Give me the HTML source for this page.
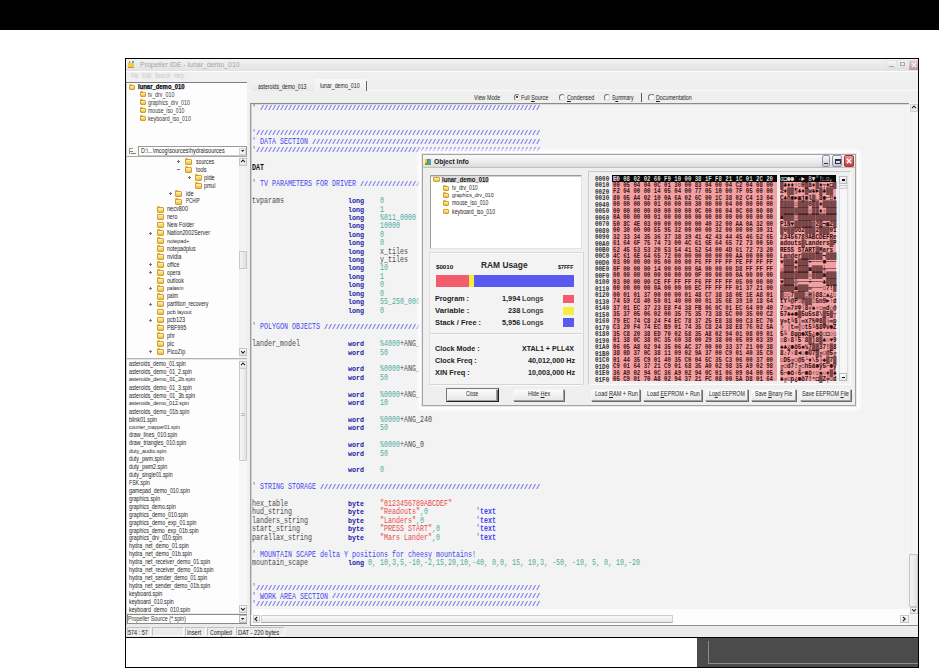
<!DOCTYPE html><html><head><meta charset="utf-8"><style>
*{margin:0;padding:0;box-sizing:border-box}
html,body{width:939px;height:668px;overflow:hidden}
body{position:relative;background:#fff;font-family:"Liberation Sans",sans-serif}
.a{position:absolute}
.t{position:absolute;white-space:pre;transform-origin:0 50%}
.c i{font-style:normal;color:rgba(40,10,10,0.6)}
.c{position:absolute;white-space:pre;font-family:"Liberation Mono",monospace;transform-origin:0 50%}
</style></head><body><div class="a" style="left:0.00px;top:0.00px;width:939.00px;height:30.00px;background:#000"></div>
<div class="a" style="left:125.00px;top:58.00px;width:794.00px;height:610.00px;border:1px solid #000;background:#efefef"></div>
<div class="a" style="left:126.00px;top:59.00px;width:792.00px;height:11.60px;background:linear-gradient(#f2f2f2,#e2e2e2)"></div>
<div class="a" style="left:126.00px;top:70.60px;width:792.00px;height:1.00px;background:#fdfdfd"></div>
<div class="t" style="left:139.50px;top:60.20px;font-size:8px;line-height:10px;color:#a6a6a6;transform:scaleX(0.869);">Propeller IDE - lunar_demo_010</div>
<div class="a" style="left:128.00px;top:62.50px;width:6.00px;height:5.00px;background:#e8d040;border-bottom:1.5px solid #d89020"></div>
<div class="a" style="left:128.50px;top:61.00px;width:1.50px;height:2.00px;background:#e06060"></div>
<div class="a" style="left:132.00px;top:61.00px;width:1.50px;height:2.00px;background:#60a0e0"></div>
<div class="a" style="left:885.50px;top:59.50px;width:11.00px;height:10.50px;background:linear-gradient(#f6f6f6,#dedede);border:1px solid #e4e4e4"></div>
<div class="a" style="left:888.50px;top:65.50px;width:5.00px;height:1.20px;background:#a8a8a8"></div>
<div class="a" style="left:897.00px;top:59.50px;width:11.00px;height:10.50px;background:linear-gradient(#f6f6f6,#dedede);border:1px solid #e4e4e4"></div>
<div class="a" style="left:899.50px;top:62.00px;width:5.00px;height:4.00px;border:1px solid #a8a8a8;border-top-width:1.5px"></div>
<div class="a" style="left:908.50px;top:59.50px;width:9.50px;height:10.50px;background:linear-gradient(#e8d4dc,#b49aa4)"></div>
<svg class="a" style="left:910.5px;top:61.5px" width="6" height="6" viewBox="0 0 6 6"><path d="M1,1 L5,5 M5,1 L1,5" stroke="#f4f0f0" stroke-width="1.3"/></svg>
<div class="a" style="left:126.00px;top:71.60px;width:792.00px;height:10.40px;background:#f0f0f0"></div>
<div class="t" style="left:131.00px;top:72.00px;font-size:6.5px;line-height:8px;color:#c6c6c6;transform:scaleX(0.687);">File</div>
<div class="t" style="left:142.00px;top:72.00px;font-size:6.5px;line-height:8px;color:#c6c6c6;transform:scaleX(0.821);">Edit</div>
<div class="t" style="left:155.00px;top:72.00px;font-size:6.5px;line-height:8px;color:#c6c6c6;transform:scaleX(0.738);">Search</div>
<div class="t" style="left:174.00px;top:72.00px;font-size:6.5px;line-height:8px;color:#c6c6c6;transform:scaleX(0.763);">Help</div>
<div class="a" style="left:126.00px;top:82.00px;width:121.00px;height:1.00px;background:#808080"></div>
<div class="a" style="left:126.00px;top:83.00px;width:121.00px;height:63.00px;background:#fdfdfd"></div>
<div class="a" style="left:129.00px;top:83.70px;width:3.2px;height:1.8px;background:#e0b040;border-radius:1px 1px 0 0"></div>
<div class="a" style="left:129.00px;top:84.50px;width:6px;height:5px;background:linear-gradient(#fff4c0 0,#fce48a 30%,#eebc3c 100%);border:1px solid #d0a030;border-radius:1px"></div>
<div class="t" style="left:138.00px;top:82.10px;font-size:7px;line-height:9px;color:#0a0a14;font-weight:bold;transform:scaleX(0.844);-webkit-text-stroke:0.25px #0a0a14;">lunar_demo_010</div>
<div class="a" style="left:139.50px;top:91.40px;width:3.2px;height:1.8px;background:#e0b040;border-radius:1px 1px 0 0"></div>
<div class="a" style="left:139.50px;top:92.20px;width:6px;height:5px;background:linear-gradient(#fff4c0 0,#fce48a 30%,#eebc3c 100%);border:1px solid #d0a030;border-radius:1px"></div>
<div class="t" style="left:147.70px;top:90.70px;font-size:6.4px;line-height:8px;color:#3a3a3a;transform:scaleX(0.833);">tv_drv_010</div>
<div class="a" style="left:139.50px;top:99.35px;width:3.2px;height:1.8px;background:#e0b040;border-radius:1px 1px 0 0"></div>
<div class="a" style="left:139.50px;top:100.15px;width:6px;height:5px;background:linear-gradient(#fff4c0 0,#fce48a 30%,#eebc3c 100%);border:1px solid #d0a030;border-radius:1px"></div>
<div class="t" style="left:147.70px;top:98.65px;font-size:6.4px;line-height:8px;color:#3a3a3a;transform:scaleX(0.825);">graphics_drv_010</div>
<div class="a" style="left:139.50px;top:107.30px;width:3.2px;height:1.8px;background:#e0b040;border-radius:1px 1px 0 0"></div>
<div class="a" style="left:139.50px;top:108.10px;width:6px;height:5px;background:linear-gradient(#fff4c0 0,#fce48a 30%,#eebc3c 100%);border:1px solid #d0a030;border-radius:1px"></div>
<div class="t" style="left:147.70px;top:106.60px;font-size:6.4px;line-height:8px;color:#3a3a3a;transform:scaleX(0.808);">mouse_iso_010</div>
<div class="a" style="left:139.50px;top:115.25px;width:3.2px;height:1.8px;background:#e0b040;border-radius:1px 1px 0 0"></div>
<div class="a" style="left:139.50px;top:116.05px;width:6px;height:5px;background:linear-gradient(#fff4c0 0,#fce48a 30%,#eebc3c 100%);border:1px solid #d0a030;border-radius:1px"></div>
<div class="t" style="left:147.70px;top:114.55px;font-size:6.4px;line-height:8px;color:#3a3a3a;transform:scaleX(0.820);">keyboard_iso_010</div>
<div class="a" style="left:126.00px;top:146.00px;width:121.00px;height:11.00px;background:#f8f8f8"></div>
<div class="a" style="left:129.00px;top:147.50px;width:1.20px;height:6.00px;background:#8a9a70"></div>
<div class="a" style="left:130.00px;top:148.00px;width:3.00px;height:1.20px;background:#9ab060"></div>
<div class="a" style="left:130.00px;top:150.50px;width:2.50px;height:1.20px;background:#7a8a70"></div>
<div class="a" style="left:131.00px;top:152.50px;width:5.00px;height:1.30px;background:#7070d0"></div>
<div class="a" style="left:133.50px;top:152.50px;width:2.50px;height:1.30px;background:#60a040"></div>
<div class="a" style="left:137.80px;top:146.40px;width:109.00px;height:9.20px;background:#fff;border:1px solid #9a9a9a;border-bottom-color:#c8c8c8"></div>
<div class="t" style="left:140.50px;top:147.00px;font-size:6.6px;line-height:8px;color:#1a1a1a;transform:scaleX(0.836);">D:\...\mcog\sources\hydra\sources</div>
<div class="a" style="left:239.00px;top:148.00px;width:7.00px;height:6.50px;background:#f4f4f4;border:1px solid #d4d4d4"></div>
<svg class="a" style="left:240.90px;top:150.24px" width="3.2" height="1.9" viewBox="0 0 3.2 1.9"><polygon points="0,0 3.2,0 1.6,1.92" fill="#222"/></svg>
<div class="a" style="left:126.00px;top:157.00px;width:121.00px;height:201.00px;background:#fdfdfd"></div>
<div class="a" style="left:126.00px;top:156.30px;width:121.00px;height:1.00px;background:#a8a8a8"></div>
<div class="a" style="left:176.90px;top:161.40px;width:3.00px;height:1.00px;background:#777"></div>
<div class="a" style="left:177.90px;top:160.40px;width:1.00px;height:3.00px;background:#777"></div>
<div class="a" style="left:184.70px;top:158.30px;width:3.2px;height:1.8px;background:#e0b040;border-radius:1px 1px 0 0"></div>
<div class="a" style="left:184.70px;top:159.10px;width:7.5px;height:6px;background:linear-gradient(#fff4c0 0,#fce48a 30%,#eebc3c 100%);border:1px solid #d0a030;border-radius:1px"></div>
<div class="t" style="left:195.50px;top:157.90px;font-size:6.4px;line-height:8px;color:#242424;transform:scaleX(0.812);">sources</div>
<div class="a" style="left:176.90px;top:169.31px;width:3.00px;height:1.00px;background:#777"></div>
<div class="a" style="left:184.70px;top:166.21px;width:3.2px;height:1.8px;background:#e0b040;border-radius:1px 1px 0 0"></div>
<div class="a" style="left:184.70px;top:167.01px;width:7.5px;height:6px;background:linear-gradient(#fff4c0 0,#fce48a 30%,#eebc3c 100%);border:1px solid #d0a030;border-radius:1px"></div>
<div class="t" style="left:195.50px;top:165.81px;font-size:6.4px;line-height:8px;color:#242424;transform:scaleX(0.784);">tools</div>
<div class="a" style="left:187.70px;top:177.22px;width:3.00px;height:1.00px;background:#777"></div>
<div class="a" style="left:188.70px;top:176.22px;width:1.00px;height:3.00px;background:#777"></div>
<div class="a" style="left:194.60px;top:174.12px;width:3.2px;height:1.8px;background:#e0b040;border-radius:1px 1px 0 0"></div>
<div class="a" style="left:194.60px;top:174.92px;width:7.5px;height:6px;background:linear-gradient(#fff4c0 0,#fce48a 30%,#eebc3c 100%);border:1px solid #d0a030;border-radius:1px"></div>
<div class="t" style="left:204.10px;top:173.72px;font-size:6.4px;line-height:8px;color:#242424;transform:scaleX(0.892);">pide</div>
<div class="a" style="left:194.60px;top:182.03px;width:3.2px;height:1.8px;background:#e0b040;border-radius:1px 1px 0 0"></div>
<div class="a" style="left:194.60px;top:182.83px;width:7.5px;height:6px;background:linear-gradient(#fff4c0 0,#fce48a 30%,#eebc3c 100%);border:1px solid #d0a030;border-radius:1px"></div>
<div class="t" style="left:204.10px;top:181.63px;font-size:6.4px;line-height:8px;color:#242424;transform:scaleX(0.821);">pmul</div>
<div class="a" style="left:168.50px;top:193.04px;width:3.00px;height:1.00px;background:#777"></div>
<div class="a" style="left:169.50px;top:192.04px;width:1.00px;height:3.00px;background:#777"></div>
<div class="a" style="left:174.80px;top:189.94px;width:3.2px;height:1.8px;background:#e0b040;border-radius:1px 1px 0 0"></div>
<div class="a" style="left:174.80px;top:190.74px;width:7.5px;height:6px;background:linear-gradient(#fff4c0 0,#fce48a 30%,#eebc3c 100%);border:1px solid #d0a030;border-radius:1px"></div>
<div class="t" style="left:185.60px;top:189.54px;font-size:6.4px;line-height:8px;color:#242424;transform:scaleX(0.901);">ide</div>
<div class="a" style="left:174.80px;top:197.85px;width:3.2px;height:1.8px;background:#e0b040;border-radius:1px 1px 0 0"></div>
<div class="a" style="left:174.80px;top:198.65px;width:7.5px;height:6px;background:linear-gradient(#fff4c0 0,#fce48a 30%,#eebc3c 100%);border:1px solid #d0a030;border-radius:1px"></div>
<div class="t" style="left:185.60px;top:197.45px;font-size:6.4px;line-height:8px;color:#242424;transform:scaleX(0.700);">PCHIP</div>
<div class="a" style="left:156.80px;top:205.76px;width:3.2px;height:1.8px;background:#e0b040;border-radius:1px 1px 0 0"></div>
<div class="a" style="left:156.80px;top:206.56px;width:7.5px;height:6px;background:linear-gradient(#fff4c0 0,#fce48a 30%,#eebc3c 100%);border:1px solid #d0a030;border-radius:1px"></div>
<div class="t" style="left:167.10px;top:205.36px;font-size:6.4px;line-height:8px;color:#242424;transform:scaleX(0.872);">necv800</div>
<div class="a" style="left:156.80px;top:213.67px;width:3.2px;height:1.8px;background:#e0b040;border-radius:1px 1px 0 0"></div>
<div class="a" style="left:156.80px;top:214.47px;width:7.5px;height:6px;background:linear-gradient(#fff4c0 0,#fce48a 30%,#eebc3c 100%);border:1px solid #d0a030;border-radius:1px"></div>
<div class="t" style="left:167.10px;top:213.27px;font-size:6.4px;line-height:8px;color:#242424;transform:scaleX(0.803);">nero</div>
<div class="a" style="left:156.80px;top:221.58px;width:3.2px;height:1.8px;background:#e0b040;border-radius:1px 1px 0 0"></div>
<div class="a" style="left:156.80px;top:222.38px;width:7.5px;height:6px;background:linear-gradient(#fff4c0 0,#fce48a 30%,#eebc3c 100%);border:1px solid #d0a030;border-radius:1px"></div>
<div class="t" style="left:167.10px;top:221.18px;font-size:6.4px;line-height:8px;color:#242424;transform:scaleX(0.828);">New Folder</div>
<div class="a" style="left:149.10px;top:232.59px;width:3.00px;height:1.00px;background:#777"></div>
<div class="a" style="left:150.10px;top:231.59px;width:1.00px;height:3.00px;background:#777"></div>
<div class="a" style="left:156.80px;top:229.49px;width:3.2px;height:1.8px;background:#e0b040;border-radius:1px 1px 0 0"></div>
<div class="a" style="left:156.80px;top:230.29px;width:7.5px;height:6px;background:linear-gradient(#fff4c0 0,#fce48a 30%,#eebc3c 100%);border:1px solid #d0a030;border-radius:1px"></div>
<div class="t" style="left:167.10px;top:229.09px;font-size:6.4px;line-height:8px;color:#242424;transform:scaleX(0.833);">Nation2002Server</div>
<div class="a" style="left:156.80px;top:237.40px;width:3.2px;height:1.8px;background:#e0b040;border-radius:1px 1px 0 0"></div>
<div class="a" style="left:156.80px;top:238.20px;width:7.5px;height:6px;background:linear-gradient(#fff4c0 0,#fce48a 30%,#eebc3c 100%);border:1px solid #d0a030;border-radius:1px"></div>
<div class="t" style="left:167.10px;top:237.50px;font-size:5.6px;line-height:7px;color:#242424;transform:scaleX(0.947);">notepad+</div>
<div class="a" style="left:156.80px;top:245.31px;width:3.2px;height:1.8px;background:#e0b040;border-radius:1px 1px 0 0"></div>
<div class="a" style="left:156.80px;top:246.11px;width:7.5px;height:6px;background:linear-gradient(#fff4c0 0,#fce48a 30%,#eebc3c 100%);border:1px solid #d0a030;border-radius:1px"></div>
<div class="t" style="left:167.10px;top:244.91px;font-size:6.4px;line-height:8px;color:#242424;transform:scaleX(0.820);">notepadplus</div>
<div class="a" style="left:156.80px;top:253.22px;width:3.2px;height:1.8px;background:#e0b040;border-radius:1px 1px 0 0"></div>
<div class="a" style="left:156.80px;top:254.02px;width:7.5px;height:6px;background:linear-gradient(#fff4c0 0,#fce48a 30%,#eebc3c 100%);border:1px solid #d0a030;border-radius:1px"></div>
<div class="t" style="left:167.10px;top:252.82px;font-size:6.4px;line-height:8px;color:#242424;transform:scaleX(0.849);">nvidia</div>
<div class="a" style="left:149.10px;top:264.23px;width:3.00px;height:1.00px;background:#777"></div>
<div class="a" style="left:150.10px;top:263.23px;width:1.00px;height:3.00px;background:#777"></div>
<div class="a" style="left:156.80px;top:261.13px;width:3.2px;height:1.8px;background:#e0b040;border-radius:1px 1px 0 0"></div>
<div class="a" style="left:156.80px;top:261.93px;width:7.5px;height:6px;background:linear-gradient(#fff4c0 0,#fce48a 30%,#eebc3c 100%);border:1px solid #d0a030;border-radius:1px"></div>
<div class="t" style="left:167.10px;top:260.73px;font-size:6.4px;line-height:8px;color:#242424;transform:scaleX(0.810);">office</div>
<div class="a" style="left:149.10px;top:272.14px;width:3.00px;height:1.00px;background:#777"></div>
<div class="a" style="left:150.10px;top:271.14px;width:1.00px;height:3.00px;background:#777"></div>
<div class="a" style="left:156.80px;top:269.04px;width:3.2px;height:1.8px;background:#e0b040;border-radius:1px 1px 0 0"></div>
<div class="a" style="left:156.80px;top:269.84px;width:7.5px;height:6px;background:linear-gradient(#fff4c0 0,#fce48a 30%,#eebc3c 100%);border:1px solid #d0a030;border-radius:1px"></div>
<div class="t" style="left:167.10px;top:268.64px;font-size:6.4px;line-height:8px;color:#242424;transform:scaleX(0.812);">opera</div>
<div class="a" style="left:156.80px;top:276.95px;width:3.2px;height:1.8px;background:#e0b040;border-radius:1px 1px 0 0"></div>
<div class="a" style="left:156.80px;top:277.75px;width:7.5px;height:6px;background:linear-gradient(#fff4c0 0,#fce48a 30%,#eebc3c 100%);border:1px solid #d0a030;border-radius:1px"></div>
<div class="t" style="left:167.10px;top:276.55px;font-size:6.4px;line-height:8px;color:#242424;transform:scaleX(0.819);">outlook</div>
<div class="a" style="left:149.10px;top:287.96px;width:3.00px;height:1.00px;background:#777"></div>
<div class="a" style="left:150.10px;top:286.96px;width:1.00px;height:3.00px;background:#777"></div>
<div class="a" style="left:156.80px;top:284.86px;width:3.2px;height:1.8px;background:#e0b040;border-radius:1px 1px 0 0"></div>
<div class="a" style="left:156.80px;top:285.66px;width:7.5px;height:6px;background:linear-gradient(#fff4c0 0,#fce48a 30%,#eebc3c 100%);border:1px solid #d0a030;border-radius:1px"></div>
<div class="t" style="left:167.10px;top:284.96px;font-size:5.6px;line-height:7px;color:#242424;transform:scaleX(0.907);">palasm</div>
<div class="a" style="left:156.80px;top:292.77px;width:3.2px;height:1.8px;background:#e0b040;border-radius:1px 1px 0 0"></div>
<div class="a" style="left:156.80px;top:293.57px;width:7.5px;height:6px;background:linear-gradient(#fff4c0 0,#fce48a 30%,#eebc3c 100%);border:1px solid #d0a030;border-radius:1px"></div>
<div class="t" style="left:167.10px;top:292.37px;font-size:6.4px;line-height:8px;color:#242424;transform:scaleX(0.792);">palm</div>
<div class="a" style="left:149.10px;top:303.78px;width:3.00px;height:1.00px;background:#777"></div>
<div class="a" style="left:150.10px;top:302.78px;width:1.00px;height:3.00px;background:#777"></div>
<div class="a" style="left:156.80px;top:300.68px;width:3.2px;height:1.8px;background:#e0b040;border-radius:1px 1px 0 0"></div>
<div class="a" style="left:156.80px;top:301.48px;width:7.5px;height:6px;background:linear-gradient(#fff4c0 0,#fce48a 30%,#eebc3c 100%);border:1px solid #d0a030;border-radius:1px"></div>
<div class="t" style="left:167.10px;top:300.28px;font-size:6.4px;line-height:8px;color:#242424;transform:scaleX(0.816);">partition_recovery</div>
<div class="a" style="left:156.80px;top:308.59px;width:3.2px;height:1.8px;background:#e0b040;border-radius:1px 1px 0 0"></div>
<div class="a" style="left:156.80px;top:309.39px;width:7.5px;height:6px;background:linear-gradient(#fff4c0 0,#fce48a 30%,#eebc3c 100%);border:1px solid #d0a030;border-radius:1px"></div>
<div class="t" style="left:167.10px;top:308.69px;font-size:5.6px;line-height:7px;color:#242424;transform:scaleX(0.962);">pcb layout</div>
<div class="a" style="left:149.10px;top:319.60px;width:3.00px;height:1.00px;background:#777"></div>
<div class="a" style="left:150.10px;top:318.60px;width:1.00px;height:3.00px;background:#777"></div>
<div class="a" style="left:156.80px;top:316.50px;width:3.2px;height:1.8px;background:#e0b040;border-radius:1px 1px 0 0"></div>
<div class="a" style="left:156.80px;top:317.30px;width:7.5px;height:6px;background:linear-gradient(#fff4c0 0,#fce48a 30%,#eebc3c 100%);border:1px solid #d0a030;border-radius:1px"></div>
<div class="t" style="left:167.10px;top:316.10px;font-size:6.4px;line-height:8px;color:#242424;transform:scaleX(0.866);">pcb123</div>
<div class="a" style="left:156.80px;top:324.41px;width:3.2px;height:1.8px;background:#e0b040;border-radius:1px 1px 0 0"></div>
<div class="a" style="left:156.80px;top:325.21px;width:7.5px;height:6px;background:linear-gradient(#fff4c0 0,#fce48a 30%,#eebc3c 100%);border:1px solid #d0a030;border-radius:1px"></div>
<div class="t" style="left:167.10px;top:324.01px;font-size:6.4px;line-height:8px;color:#242424;transform:scaleX(0.830);">PBF995</div>
<div class="a" style="left:156.80px;top:332.32px;width:3.2px;height:1.8px;background:#e0b040;border-radius:1px 1px 0 0"></div>
<div class="a" style="left:156.80px;top:333.12px;width:7.5px;height:6px;background:linear-gradient(#fff4c0 0,#fce48a 30%,#eebc3c 100%);border:1px solid #d0a030;border-radius:1px"></div>
<div class="t" style="left:167.10px;top:331.92px;font-size:6.4px;line-height:8px;color:#242424;transform:scaleX(0.853);">phr</div>
<div class="a" style="left:156.80px;top:340.23px;width:3.2px;height:1.8px;background:#e0b040;border-radius:1px 1px 0 0"></div>
<div class="a" style="left:156.80px;top:341.03px;width:7.5px;height:6px;background:linear-gradient(#fff4c0 0,#fce48a 30%,#eebc3c 100%);border:1px solid #d0a030;border-radius:1px"></div>
<div class="t" style="left:167.10px;top:339.83px;font-size:6.4px;line-height:8px;color:#242424;transform:scaleX(0.855);">pic</div>
<div class="a" style="left:149.10px;top:351.24px;width:3.00px;height:1.00px;background:#777"></div>
<div class="a" style="left:150.10px;top:350.24px;width:1.00px;height:3.00px;background:#777"></div>
<div class="a" style="left:156.80px;top:348.14px;width:3.2px;height:1.8px;background:#e0b040;border-radius:1px 1px 0 0"></div>
<div class="a" style="left:156.80px;top:348.94px;width:7.5px;height:6px;background:linear-gradient(#fff4c0 0,#fce48a 30%,#eebc3c 100%);border:1px solid #d0a030;border-radius:1px"></div>
<div class="t" style="left:167.10px;top:347.74px;font-size:6.4px;line-height:8px;color:#242424;transform:scaleX(0.852);">PicoZip</div>
<div class="a" style="left:239.00px;top:157.00px;width:8.00px;height:201.00px;background:#f2f2f2"></div>
<div class="a" style="left:239.00px;top:157.50px;width:8.00px;height:8.00px;background:linear-gradient(#fafafa,#e4e4e4);border:1px solid #c4c4c4"></div>
<svg class="a" style="left:240.00px;top:158.90px" width="6.0" height="4.2" viewBox="0 0 6.0 4.2"><polyline points="1,3.2 3.0,1 5.0,3.2" fill="none" stroke="#222" stroke-width="1.1"/></svg>
<div class="a" style="left:239.00px;top:251.00px;width:8.00px;height:18.00px;background:linear-gradient(90deg,#f2f2f2,#e0e0e0);border:1px solid #c8c8c8"></div>
<div class="a" style="left:239.00px;top:348.00px;width:8.00px;height:8.00px;background:linear-gradient(#fafafa,#e4e4e4);border:1px solid #c4c4c4"></div>
<svg class="a" style="left:240.00px;top:349.90px" width="6.0" height="4.2" viewBox="0 0 6.0 4.2"><polyline points="1,1 3.0,3.2 5.0,1" fill="none" stroke="#222" stroke-width="1.1"/></svg>
<div class="a" style="left:126.00px;top:358.00px;width:121.00px;height:1.00px;background:#b4b4b4"></div>
<div class="a" style="left:126.00px;top:359.00px;width:121.00px;height:1.00px;background:#e4e4e4"></div>
<div class="a" style="left:126.00px;top:360.00px;width:121.00px;height:254.00px;background:#fdfdfd"></div>
<div class="t" style="left:129.00px;top:360.00px;font-size:6.4px;line-height:8px;color:#242424;transform:scaleX(0.814);">asteroids_demo_01.spin</div>
<div class="t" style="left:129.00px;top:367.93px;font-size:6.4px;line-height:8px;color:#242424;transform:scaleX(0.821);">asteroids_demo_01_2.spin</div>
<div class="t" style="left:129.00px;top:376.36px;font-size:5.6px;line-height:7px;color:#242424;transform:scaleX(0.942);">asteroids_demo_01_2b.spin</div>
<div class="t" style="left:129.00px;top:383.79px;font-size:6.4px;line-height:8px;color:#242424;transform:scaleX(0.821);">asteroids_demo_01_3.spin</div>
<div class="t" style="left:129.00px;top:391.72px;font-size:6.4px;line-height:8px;color:#242424;transform:scaleX(0.824);">asteroids_demo_01_3b.spin</div>
<div class="t" style="left:129.00px;top:400.15px;font-size:5.6px;line-height:7px;color:#242424;transform:scaleX(0.935);">asteroids_demo_012.spin</div>
<div class="t" style="left:129.00px;top:407.58px;font-size:6.4px;line-height:8px;color:#242424;transform:scaleX(0.824);">asteroids_demo_01b.spin</div>
<div class="t" style="left:129.00px;top:415.51px;font-size:6.4px;line-height:8px;color:#242424;transform:scaleX(0.828);">blink01.spin</div>
<div class="t" style="left:129.00px;top:423.94px;font-size:5.6px;line-height:7px;color:#242424;transform:scaleX(0.865);">counter_mapper01.spin</div>
<div class="t" style="left:129.00px;top:431.37px;font-size:6.4px;line-height:8px;color:#242424;transform:scaleX(0.829);">draw_lines_010.spin</div>
<div class="t" style="left:129.00px;top:439.30px;font-size:6.4px;line-height:8px;color:#242424;transform:scaleX(0.826);">draw_triangles_010.spin</div>
<div class="t" style="left:129.00px;top:447.73px;font-size:5.6px;line-height:7px;color:#242424;transform:scaleX(0.958);">duty_audio.spin</div>
<div class="t" style="left:129.00px;top:455.16px;font-size:6.4px;line-height:8px;color:#242424;transform:scaleX(0.824);">duty_pwm.spin</div>
<div class="t" style="left:129.00px;top:463.09px;font-size:6.4px;line-height:8px;color:#242424;transform:scaleX(0.828);">duty_pwm2.spin</div>
<div class="t" style="left:129.00px;top:471.02px;font-size:6.4px;line-height:8px;color:#242424;transform:scaleX(0.824);">duty_single01.spin</div>
<div class="t" style="left:129.00px;top:478.95px;font-size:6.4px;line-height:8px;color:#242424;transform:scaleX(0.805);">FSK.spin</div>
<div class="t" style="left:129.00px;top:486.88px;font-size:6.4px;line-height:8px;color:#242424;transform:scaleX(0.823);">gamepad_demo_010.spin</div>
<div class="t" style="left:129.00px;top:494.81px;font-size:6.4px;line-height:8px;color:#242424;transform:scaleX(0.825);">graphics.spin</div>
<div class="t" style="left:129.00px;top:502.74px;font-size:6.4px;line-height:8px;color:#242424;transform:scaleX(0.819);">graphics_demo.spin</div>
<div class="t" style="left:129.00px;top:510.67px;font-size:6.4px;line-height:8px;color:#242424;transform:scaleX(0.826);">graphics_demo_010.spin</div>
<div class="t" style="left:129.00px;top:518.60px;font-size:6.4px;line-height:8px;color:#242424;transform:scaleX(0.826);">graphics_demo_exp_01.spin</div>
<div class="t" style="left:129.00px;top:526.53px;font-size:6.4px;line-height:8px;color:#242424;transform:scaleX(0.818);">graphics_demo_exp_01b.spin</div>
<div class="t" style="left:129.00px;top:534.46px;font-size:6.4px;line-height:8px;color:#242424;transform:scaleX(0.826);">graphics_drv_010.spin</div>
<div class="t" style="left:129.00px;top:542.39px;font-size:6.4px;line-height:8px;color:#242424;transform:scaleX(0.829);">hydra_net_demo_01.spin</div>
<div class="t" style="left:129.00px;top:550.32px;font-size:6.4px;line-height:8px;color:#242424;transform:scaleX(0.832);">hydra_net_demo_01b.spin</div>
<div class="t" style="left:129.00px;top:558.25px;font-size:6.4px;line-height:8px;color:#242424;transform:scaleX(0.826);">hydra_net_receiver_demo_01.spin</div>
<div class="t" style="left:129.00px;top:566.18px;font-size:6.4px;line-height:8px;color:#242424;transform:scaleX(0.829);">hydra_net_receiver_demo_01b.spin</div>
<div class="t" style="left:129.00px;top:574.11px;font-size:6.4px;line-height:8px;color:#242424;transform:scaleX(0.822);">hydra_net_sender_demo_01.spin</div>
<div class="t" style="left:129.00px;top:582.04px;font-size:6.4px;line-height:8px;color:#242424;transform:scaleX(0.822);">hydra_net_sender_demo_01b.spin</div>
<div class="t" style="left:129.00px;top:589.97px;font-size:6.4px;line-height:8px;color:#242424;transform:scaleX(0.838);">keyboard.spin</div>
<div class="t" style="left:129.00px;top:597.90px;font-size:6.4px;line-height:8px;color:#242424;transform:scaleX(0.830);">keyboard_010.spin</div>
<div class="t" style="left:129.00px;top:605.83px;font-size:6.4px;line-height:8px;color:#242424;transform:scaleX(0.831);">keyboard_demo_010.spin</div>
<div class="a" style="left:239.00px;top:360.00px;width:8.00px;height:253.00px;background:#f7f7f7"></div>
<div class="a" style="left:239.00px;top:360.50px;width:8.00px;height:8.00px;background:linear-gradient(#fafafa,#e4e4e4);border:1px solid #c4c4c4"></div>
<svg class="a" style="left:240.00px;top:361.90px" width="6.0" height="4.2" viewBox="0 0 6.0 4.2"><polyline points="1,3.2 3.0,1 5.0,3.2" fill="none" stroke="#222" stroke-width="1.1"/></svg>
<div class="a" style="left:239.00px;top:367.80px;width:7.60px;height:93.20px;background:linear-gradient(90deg,#f6f6f6,#e4e4e4);border:1px solid #cacaca;border-radius:1px"></div>
<div class="a" style="left:241.00px;top:413.00px;width:4.00px;height:0.80px;background:#bbb"></div>
<div class="a" style="left:241.00px;top:415.00px;width:4.00px;height:0.80px;background:#bbb"></div>
<div class="a" style="left:239.00px;top:605.00px;width:8.00px;height:8.00px;background:linear-gradient(#fafafa,#e4e4e4);border:1px solid #c4c4c4"></div>
<svg class="a" style="left:240.00px;top:606.90px" width="6.0" height="4.2" viewBox="0 0 6.0 4.2"><polyline points="1,1 3.0,3.2 5.0,1" fill="none" stroke="#222" stroke-width="1.1"/></svg>
<div class="a" style="left:126.00px;top:613.00px;width:121.00px;height:13.00px;background:#eaeaea"></div>
<div class="a" style="left:126.50px;top:613.50px;width:120.50px;height:10.00px;background:#fff;border:1px solid #8a8a8a"></div>
<div class="t" style="left:128.30px;top:613.80px;font-size:7px;line-height:9px;color:#333;transform:scaleX(0.761);">Propeller Source (*.spin)</div>
<div class="a" style="left:238.50px;top:615.00px;width:8.00px;height:7.50px;background:linear-gradient(#fafafa,#e0e0e0);border:1px solid #bbb"></div>
<svg class="a" style="left:240.90px;top:617.84px" width="3.2" height="1.9" viewBox="0 0 3.2 1.9"><polygon points="0,0 3.2,0 1.6,1.92" fill="#222"/></svg>
<div class="a" style="left:126.00px;top:83.00px;width:1.00px;height:542.00px;background:#c8c8c8"></div>
<div class="a" style="left:248.00px;top:90.00px;width:670.00px;height:1.00px;background:#fafafa"></div>
<div class="a" style="left:252.00px;top:80.00px;width:62.00px;height:11.00px;background:linear-gradient(#f2f2f2,#e8e8e8)"></div>
<div class="a" style="left:315.00px;top:79.00px;width:51.00px;height:12.00px;background:linear-gradient(#f8f8f8,#efefef)"></div>
<div class="t" style="left:257.70px;top:83.00px;font-size:6.4px;line-height:8px;color:#1e1e1e;transform:scaleX(0.811);">asteroids_demo_013</div>
<div class="t" style="left:320.30px;top:82.20px;font-size:6.4px;line-height:8px;color:#1e1e1e;transform:scaleX(0.826);">lunar_demo_010</div>
<div class="a" style="left:366.00px;top:81.00px;width:1.00px;height:10.00px;background:#666"></div>
<div class="t" style="left:473.70px;top:93.80px;font-size:6.4px;line-height:8px;color:#2a2a2a;transform:scaleX(0.834);">View Mode</div>
<div class="a" style="left:513.60px;top:94.20px;width:6.5px;height:6.5px;border-radius:50%;border:1px solid #777;border-right-color:#ddd;border-bottom-color:#ddd;background:#fafafa"></div>
<div class="a" style="left:515.60px;top:96.20px;width:2.2px;height:2.2px;border-radius:50%;background:#111"></div>
<div class="t" style="left:521.40px;top:93.80px;font-size:6.4px;line-height:8px;color:#1e1e1e;transform:scaleX(0.840);">Full <u>S</u>ource</div>
<div class="a" style="left:558.90px;top:94.20px;width:6.5px;height:6.5px;border-radius:50%;border:1px solid #777;border-right-color:#ddd;border-bottom-color:#ddd;background:#fafafa"></div>
<div class="t" style="left:566.70px;top:93.80px;font-size:6.4px;line-height:8px;color:#1e1e1e;transform:scaleX(0.831);"><u>C</u>ondensed</div>
<div class="a" style="left:603.50px;top:94.20px;width:6.5px;height:6.5px;border-radius:50%;border:1px solid #777;border-right-color:#ddd;border-bottom-color:#ddd;background:#fafafa"></div>
<div class="t" style="left:611.60px;top:93.80px;font-size:6.4px;line-height:8px;color:#1e1e1e;transform:scaleX(0.785);">S<u>u</u>mmary</div>
<div class="a" style="left:641.00px;top:93.00px;width:1.00px;height:9.00px;background:#555"></div>
<div class="a" style="left:648.30px;top:94.20px;width:6.5px;height:6.5px;border-radius:50%;border:1px solid #777;border-right-color:#ddd;border-bottom-color:#ddd;background:#fafafa"></div>
<div class="t" style="left:656.00px;top:93.80px;font-size:6.4px;line-height:8px;color:#1e1e1e;transform:scaleX(0.831);"><u>D</u>ocumentation</div>
<div class="a" style="left:250.00px;top:103.00px;width:668.00px;height:522.00px;border-top:1px solid #8a8a8a;border-left:1px solid #9c9c9c;background:#f3f3f3"></div>
<div class="a" style="left:251.00px;top:104.00px;width:1.00px;height:511.00px;background:#d0d0d0"></div>
<div class="a" style="left:252.00px;top:104.00px;width:657.00px;height:1.00px;background:#dcdcdc"></div>
<div class="a" style="left:252.00px;top:608.50px;width:657.00px;height:16.20px;background:#fdfdfd"></div>
<div class="a" style="left:909.00px;top:103.00px;width:9.00px;height:511.00px;background:#f7f7f7"></div>
<div class="a" style="left:909.50px;top:103.50px;width:8.00px;height:8.00px;background:linear-gradient(#fafafa,#e4e4e4);border:1px solid #d0d0d0"></div>
<svg class="a" style="left:910.50px;top:105.40px" width="6.0" height="4.2" viewBox="0 0 6.0 4.2"><polyline points="1,3.2 3.0,1 5.0,3.2" fill="none" stroke="#222" stroke-width="1.1"/></svg>
<div class="a" style="left:909.50px;top:112.00px;width:8.00px;height:442.00px;background:#f4f4f4;border-left:1px solid #ececec"></div>
<div class="a" style="left:909.00px;top:554.40px;width:9.00px;height:52.40px;background:linear-gradient(90deg,#f4f4f4,#e2e2e2);border:1px solid #c4c4c4;border-radius:1px"></div>
<div class="a" style="left:909.50px;top:606.80px;width:8.00px;height:7.40px;background:linear-gradient(#fafafa,#e4e4e4);border:1px solid #c8c8c8"></div>
<svg class="a" style="left:910.50px;top:608.40px" width="6.0" height="4.2" viewBox="0 0 6.0 4.2"><polyline points="1,1 3.0,3.2 5.0,1" fill="none" stroke="#222" stroke-width="1.1"/></svg>
<div class="a" style="left:252.50px;top:615.00px;width:7.50px;height:8.20px;background:linear-gradient(#fafafa,#e8e8e8);border:1px solid #c8c8c8"></div>
<svg class="a" style="left:254.20px;top:616.10px" width="4.2" height="6.0" viewBox="0 0 4.2 6.0"><polyline points="3.2,1 1,3.0 3.2,5.0" fill="none" stroke="#222" stroke-width="1.1"/></svg>
<div class="a" style="left:260.50px;top:615.00px;width:412.50px;height:8.20px;background:linear-gradient(#fbfbfb,#e6e6e6);border:1px solid #cdcdcd;border-bottom-color:#aaa;border-radius:1px"></div>
<div class="a" style="left:899.60px;top:615.00px;width:9.00px;height:8.20px;background:linear-gradient(#fafafa,#e8e8e8);border:1px solid #c8c8c8"></div>
<svg class="a" style="left:902.00px;top:616.10px" width="4.2" height="6.0" viewBox="0 0 4.2 6.0"><polyline points="1,1 3.2,3.0 1,5.0" fill="none" stroke="#222" stroke-width="1.1"/></svg>
<div class="a" style="left:250.00px;top:624.60px;width:668.00px;height:1.00px;background:#8e8e8e"></div>
<div class="c" style="left:252.30px;top:104.61px;font-size:8.5px;line-height:8px;transform:scaleX(0.7843);color:#4444ee">&#x27; </div>
<div class="c" style="left:260.30px;top:103.91px;font-size:8.5px;line-height:8px;transform:scale(0.7843,0.8);font-weight:bold;color:#4444ee">//////////////////////////////////////////////////////////////////////</div>
<div class="c" style="left:252.30px;top:129.85px;font-size:8.5px;line-height:8px;transform:scaleX(0.7843);color:#4444ee">&#x27;</div>
<div class="c" style="left:256.30px;top:129.15px;font-size:8.5px;line-height:8px;transform:scale(0.7843,0.8);font-weight:bold;color:#4444ee">///////////////////////////////////////////////////////////////////////</div>
<div class="c" style="left:252.30px;top:138.27px;font-size:8.5px;line-height:8px;transform:scaleX(0.7843);color:#4444ee">&#x27; DATA SECTION </div>
<div class="c" style="left:312.30px;top:137.57px;font-size:8.5px;line-height:8px;transform:scale(0.7843,0.8);font-weight:bold;color:#4444ee">/////////////////////////////////////////////////////////</div>
<div class="c" style="left:252.30px;top:146.68px;font-size:8.5px;line-height:8px;transform:scaleX(0.7843);color:#4444ee">&#x27;</div>
<div class="c" style="left:256.30px;top:145.98px;font-size:8.5px;line-height:8px;transform:scale(0.7843,0.8);font-weight:bold;color:#4444ee">///////////////////////////////////////////////////////////////////////</div>
<div class="c" style="left:252.30px;top:163.51px;font-size:8.5px;line-height:8px;transform:scale(0.7843,1);color:#101010;font-weight:bold">DAT</div>
<div class="c" style="left:252.30px;top:180.34px;font-size:8.5px;line-height:8px;transform:scaleX(0.7843);color:#4444ee">&#x27; TV PARAMETERS FOR DRIVER </div>
<div class="c" style="left:360.30px;top:179.64px;font-size:8.5px;line-height:8px;transform:scale(0.7843,0.8);font-weight:bold;color:#4444ee">/////////////////////////////////////////////</div>
<div class="c" style="left:252.30px;top:197.16px;font-size:8.5px;line-height:8px;transform:scale(0.7843,1);color:#4a4a4a">tvparams</div>
<div class="c" style="left:348.30px;top:197.16px;font-size:8.5px;line-height:8px;transform:scale(0.7843,0.85);color:#1818a8;font-weight:bold">long</div>
<div class="c" style="left:380.30px;top:197.16px;font-size:8.5px;line-height:8px;transform:scale(0.7843,1);color:#52aca0">0</div>
<div class="c" style="left:348.30px;top:205.58px;font-size:8.5px;line-height:8px;transform:scale(0.7843,0.85);color:#1818a8;font-weight:bold">long</div>
<div class="c" style="left:380.30px;top:205.58px;font-size:8.5px;line-height:8px;transform:scale(0.7843,1);color:#52aca0">1</div>
<div class="c" style="left:348.30px;top:213.99px;font-size:8.5px;line-height:8px;transform:scale(0.7843,0.85);color:#1818a8;font-weight:bold">long</div>
<div class="c" style="left:380.30px;top:213.99px;font-size:8.5px;line-height:8px;transform:scale(0.7843,1);color:#52aca0">%011_0000</div>
<div class="c" style="left:348.30px;top:222.41px;font-size:8.5px;line-height:8px;transform:scale(0.7843,0.85);color:#1818a8;font-weight:bold">long</div>
<div class="c" style="left:380.30px;top:222.41px;font-size:8.5px;line-height:8px;transform:scale(0.7843,1);color:#52aca0">10000</div>
<div class="c" style="left:348.30px;top:230.82px;font-size:8.5px;line-height:8px;transform:scale(0.7843,0.85);color:#1818a8;font-weight:bold">long</div>
<div class="c" style="left:380.30px;top:230.82px;font-size:8.5px;line-height:8px;transform:scale(0.7843,1);color:#52aca0">0</div>
<div class="c" style="left:348.30px;top:239.23px;font-size:8.5px;line-height:8px;transform:scale(0.7843,0.85);color:#1818a8;font-weight:bold">long</div>
<div class="c" style="left:380.30px;top:239.23px;font-size:8.5px;line-height:8px;transform:scale(0.7843,1);color:#52aca0">0</div>
<div class="c" style="left:348.30px;top:247.65px;font-size:8.5px;line-height:8px;transform:scale(0.7843,0.85);color:#1818a8;font-weight:bold">long</div>
<div class="c" style="left:380.30px;top:247.65px;font-size:8.5px;line-height:8px;transform:scale(0.7843,1);color:#4a4a4a">x_tiles</div>
<div class="c" style="left:348.30px;top:256.06px;font-size:8.5px;line-height:8px;transform:scale(0.7843,0.85);color:#1818a8;font-weight:bold">long</div>
<div class="c" style="left:380.30px;top:256.06px;font-size:8.5px;line-height:8px;transform:scale(0.7843,1);color:#4a4a4a">y_tiles</div>
<div class="c" style="left:348.30px;top:264.48px;font-size:8.5px;line-height:8px;transform:scale(0.7843,0.85);color:#1818a8;font-weight:bold">long</div>
<div class="c" style="left:380.30px;top:264.48px;font-size:8.5px;line-height:8px;transform:scale(0.7843,1);color:#52aca0">10</div>
<div class="c" style="left:348.30px;top:272.89px;font-size:8.5px;line-height:8px;transform:scale(0.7843,0.85);color:#1818a8;font-weight:bold">long</div>
<div class="c" style="left:380.30px;top:272.89px;font-size:8.5px;line-height:8px;transform:scale(0.7843,1);color:#52aca0">1</div>
<div class="c" style="left:348.30px;top:281.30px;font-size:8.5px;line-height:8px;transform:scale(0.7843,0.85);color:#1818a8;font-weight:bold">long</div>
<div class="c" style="left:380.30px;top:281.30px;font-size:8.5px;line-height:8px;transform:scale(0.7843,1);color:#52aca0">0</div>
<div class="c" style="left:348.30px;top:289.72px;font-size:8.5px;line-height:8px;transform:scale(0.7843,0.85);color:#1818a8;font-weight:bold">long</div>
<div class="c" style="left:380.30px;top:289.72px;font-size:8.5px;line-height:8px;transform:scale(0.7843,1);color:#52aca0">0</div>
<div class="c" style="left:348.30px;top:298.13px;font-size:8.5px;line-height:8px;transform:scale(0.7843,0.85);color:#1818a8;font-weight:bold">long</div>
<div class="c" style="left:380.30px;top:298.13px;font-size:8.5px;line-height:8px;transform:scale(0.7843,1);color:#52aca0">55_250_000</div>
<div class="c" style="left:348.30px;top:306.55px;font-size:8.5px;line-height:8px;transform:scale(0.7843,0.85);color:#1818a8;font-weight:bold">long</div>
<div class="c" style="left:380.30px;top:306.55px;font-size:8.5px;line-height:8px;transform:scale(0.7843,1);color:#52aca0">0</div>
<div class="c" style="left:252.30px;top:323.37px;font-size:8.5px;line-height:8px;transform:scaleX(0.7843);color:#4444ee">&#x27; POLYGON OBJECTS </div>
<div class="c" style="left:324.30px;top:322.67px;font-size:8.5px;line-height:8px;transform:scale(0.7843,0.8);font-weight:bold;color:#4444ee">//////////////////////////////////////////////////////</div>
<div class="c" style="left:252.30px;top:340.20px;font-size:8.5px;line-height:8px;transform:scale(0.7843,1);color:#4a4a4a">lander_model</div>
<div class="c" style="left:348.30px;top:340.20px;font-size:8.5px;line-height:8px;transform:scale(0.7843,0.85);color:#1818a8;font-weight:bold">word</div>
<div class="c" style="left:380.30px;top:340.20px;font-size:8.5px;line-height:8px;transform:scale(0.7843,1);color:#52aca0">%4000</div>
<div class="c" style="left:400.30px;top:340.20px;font-size:8.5px;line-height:8px;transform:scale(0.7843,1);color:#4a4a4a">+ANG_0</div>
<div class="c" style="left:348.30px;top:348.62px;font-size:8.5px;line-height:8px;transform:scale(0.7843,0.85);color:#1818a8;font-weight:bold">word</div>
<div class="c" style="left:380.30px;top:348.62px;font-size:8.5px;line-height:8px;transform:scale(0.7843,1);color:#52aca0">50</div>
<div class="c" style="left:348.30px;top:365.44px;font-size:8.5px;line-height:8px;transform:scale(0.7843,0.85);color:#1818a8;font-weight:bold">word</div>
<div class="c" style="left:380.30px;top:365.44px;font-size:8.5px;line-height:8px;transform:scale(0.7843,1);color:#52aca0">%0000</div>
<div class="c" style="left:400.30px;top:365.44px;font-size:8.5px;line-height:8px;transform:scale(0.7843,1);color:#4a4a4a">+ANG_120</div>
<div class="c" style="left:348.30px;top:373.86px;font-size:8.5px;line-height:8px;transform:scale(0.7843,0.85);color:#1818a8;font-weight:bold">word</div>
<div class="c" style="left:380.30px;top:373.86px;font-size:8.5px;line-height:8px;transform:scale(0.7843,1);color:#52aca0">50</div>
<div class="c" style="left:348.30px;top:390.69px;font-size:8.5px;line-height:8px;transform:scale(0.7843,0.85);color:#1818a8;font-weight:bold">word</div>
<div class="c" style="left:380.30px;top:390.69px;font-size:8.5px;line-height:8px;transform:scale(0.7843,1);color:#52aca0">%0000</div>
<div class="c" style="left:400.30px;top:390.69px;font-size:8.5px;line-height:8px;transform:scale(0.7843,1);color:#4a4a4a">+ANG_180</div>
<div class="c" style="left:348.30px;top:399.10px;font-size:8.5px;line-height:8px;transform:scale(0.7843,0.85);color:#1818a8;font-weight:bold">word</div>
<div class="c" style="left:380.30px;top:399.10px;font-size:8.5px;line-height:8px;transform:scale(0.7843,1);color:#52aca0">10</div>
<div class="c" style="left:348.30px;top:415.93px;font-size:8.5px;line-height:8px;transform:scale(0.7843,0.85);color:#1818a8;font-weight:bold">word</div>
<div class="c" style="left:380.30px;top:415.93px;font-size:8.5px;line-height:8px;transform:scale(0.7843,1);color:#52aca0">%0000</div>
<div class="c" style="left:400.30px;top:415.93px;font-size:8.5px;line-height:8px;transform:scale(0.7843,1);color:#4a4a4a">+ANG_240</div>
<div class="c" style="left:348.30px;top:424.34px;font-size:8.5px;line-height:8px;transform:scale(0.7843,0.85);color:#1818a8;font-weight:bold">word</div>
<div class="c" style="left:380.30px;top:424.34px;font-size:8.5px;line-height:8px;transform:scale(0.7843,1);color:#52aca0">50</div>
<div class="c" style="left:348.30px;top:441.17px;font-size:8.5px;line-height:8px;transform:scale(0.7843,0.85);color:#1818a8;font-weight:bold">word</div>
<div class="c" style="left:380.30px;top:441.17px;font-size:8.5px;line-height:8px;transform:scale(0.7843,1);color:#52aca0">%0000</div>
<div class="c" style="left:400.30px;top:441.17px;font-size:8.5px;line-height:8px;transform:scale(0.7843,1);color:#4a4a4a">+ANG_0</div>
<div class="c" style="left:348.30px;top:449.58px;font-size:8.5px;line-height:8px;transform:scale(0.7843,0.85);color:#1818a8;font-weight:bold">word</div>
<div class="c" style="left:380.30px;top:449.58px;font-size:8.5px;line-height:8px;transform:scale(0.7843,1);color:#52aca0">50</div>
<div class="c" style="left:348.30px;top:466.41px;font-size:8.5px;line-height:8px;transform:scale(0.7843,0.85);color:#1818a8;font-weight:bold">word</div>
<div class="c" style="left:380.30px;top:466.41px;font-size:8.5px;line-height:8px;transform:scale(0.7843,1);color:#52aca0">0</div>
<div class="c" style="left:252.30px;top:483.24px;font-size:8.5px;line-height:8px;transform:scaleX(0.7843);color:#4444ee">&#x27; STRING STORAGE </div>
<div class="c" style="left:320.30px;top:482.54px;font-size:8.5px;line-height:8px;transform:scale(0.7843,0.8);font-weight:bold;color:#4444ee">///////////////////////////////////////////////////////</div>
<div class="c" style="left:252.30px;top:500.07px;font-size:8.5px;line-height:8px;transform:scale(0.7843,1);color:#4a4a4a">hex_table</div>
<div class="c" style="left:348.30px;top:500.07px;font-size:8.5px;line-height:8px;transform:scale(0.7843,0.85);color:#1818a8;font-weight:bold">byte</div>
<div class="c" style="left:380.30px;top:500.07px;font-size:8.5px;line-height:8px;transform:scale(0.7843,1);color:#e84a4a">&quot;0123456789ABCDEF&quot;</div>
<div class="c" style="left:252.30px;top:508.48px;font-size:8.5px;line-height:8px;transform:scale(0.7843,1);color:#4a4a4a">hud_string</div>
<div class="c" style="left:348.30px;top:508.48px;font-size:8.5px;line-height:8px;transform:scale(0.7843,0.85);color:#1818a8;font-weight:bold">byte</div>
<div class="c" style="left:380.30px;top:508.48px;font-size:8.5px;line-height:8px;transform:scale(0.7843,1);color:#e84a4a">&quot;Readouts&quot;</div>
<div class="c" style="left:420.30px;top:508.48px;font-size:8.5px;line-height:8px;transform:scale(0.7843,1);color:#52aca0">,0</div>
<div class="c" style="left:476.30px;top:508.48px;font-size:8.5px;line-height:8px;transform:scale(0.7843,1);color:#4444ee">&#x27;</div>
<div class="c" style="left:480.30px;top:508.48px;font-size:8.5px;line-height:8px;transform:scale(0.7843,1);color:#4444ee;font-weight:bold">text</div>
<div class="c" style="left:252.30px;top:516.90px;font-size:8.5px;line-height:8px;transform:scale(0.7843,1);color:#4a4a4a">landers_string</div>
<div class="c" style="left:348.30px;top:516.90px;font-size:8.5px;line-height:8px;transform:scale(0.7843,0.85);color:#1818a8;font-weight:bold">byte</div>
<div class="c" style="left:380.30px;top:516.90px;font-size:8.5px;line-height:8px;transform:scale(0.7843,1);color:#e84a4a">&quot;Landers&quot;</div>
<div class="c" style="left:416.30px;top:516.90px;font-size:8.5px;line-height:8px;transform:scale(0.7843,1);color:#52aca0">,0</div>
<div class="c" style="left:476.30px;top:516.90px;font-size:8.5px;line-height:8px;transform:scale(0.7843,1);color:#4444ee">&#x27;</div>
<div class="c" style="left:480.30px;top:516.90px;font-size:8.5px;line-height:8px;transform:scale(0.7843,1);color:#4444ee;font-weight:bold">text</div>
<div class="c" style="left:252.30px;top:525.31px;font-size:8.5px;line-height:8px;transform:scale(0.7843,1);color:#4a4a4a">start_string</div>
<div class="c" style="left:348.30px;top:525.31px;font-size:8.5px;line-height:8px;transform:scale(0.7843,0.85);color:#1818a8;font-weight:bold">byte</div>
<div class="c" style="left:380.30px;top:525.31px;font-size:8.5px;line-height:8px;transform:scale(0.7843,1);color:#e84a4a">&quot;PRESS START&quot;</div>
<div class="c" style="left:432.30px;top:525.31px;font-size:8.5px;line-height:8px;transform:scale(0.7843,1);color:#52aca0">,0</div>
<div class="c" style="left:476.30px;top:525.31px;font-size:8.5px;line-height:8px;transform:scale(0.7843,1);color:#4444ee">&#x27;</div>
<div class="c" style="left:480.30px;top:525.31px;font-size:8.5px;line-height:8px;transform:scale(0.7843,1);color:#4444ee;font-weight:bold">text</div>
<div class="c" style="left:252.30px;top:533.72px;font-size:8.5px;line-height:8px;transform:scale(0.7843,1);color:#4a4a4a">parallax_string</div>
<div class="c" style="left:348.30px;top:533.72px;font-size:8.5px;line-height:8px;transform:scale(0.7843,0.85);color:#1818a8;font-weight:bold">byte</div>
<div class="c" style="left:380.30px;top:533.72px;font-size:8.5px;line-height:8px;transform:scale(0.7843,1);color:#e84a4a">&quot;Mars Lander&quot;</div>
<div class="c" style="left:432.30px;top:533.72px;font-size:8.5px;line-height:8px;transform:scale(0.7843,1);color:#52aca0">,0</div>
<div class="c" style="left:476.30px;top:533.72px;font-size:8.5px;line-height:8px;transform:scale(0.7843,1);color:#4444ee">&#x27;</div>
<div class="c" style="left:480.30px;top:533.72px;font-size:8.5px;line-height:8px;transform:scale(0.7843,1);color:#4444ee;font-weight:bold">text</div>
<div class="c" style="left:252.30px;top:550.55px;font-size:8.5px;line-height:8px;transform:scale(0.7843,1);color:#4444ee">&#x27; MOUNTAIN SCAPE delta Y positions for cheesy mountains!</div>
<div class="c" style="left:252.30px;top:558.97px;font-size:8.5px;line-height:8px;transform:scale(0.7843,1);color:#4a4a4a">mountain_scape</div>
<div class="c" style="left:348.30px;top:558.97px;font-size:8.5px;line-height:8px;transform:scale(0.7843,0.85);color:#1818a8;font-weight:bold">long</div>
<div class="c" style="left:368.30px;top:558.97px;font-size:8.5px;line-height:8px;transform:scale(0.7843,1);color:#52aca0">0, 10,3,5,-10,-2,15,20,10,-40, 0,0, 15, 10,3, -50, -10, 5, 0, 10,-20</div>
<div class="c" style="left:252.30px;top:584.21px;font-size:8.5px;line-height:8px;transform:scaleX(0.7843);color:#4444ee">&#x27;</div>
<div class="c" style="left:256.30px;top:583.51px;font-size:8.5px;line-height:8px;transform:scale(0.7843,0.8);font-weight:bold;color:#4444ee">///////////////////////////////////////////////////////////////////////</div>
<div class="c" style="left:252.30px;top:592.62px;font-size:8.5px;line-height:8px;transform:scaleX(0.7843);color:#4444ee">&#x27; WORK AREA SECTION </div>
<div class="c" style="left:332.30px;top:591.92px;font-size:8.5px;line-height:8px;transform:scale(0.7843,0.8);font-weight:bold;color:#4444ee">////////////////////////////////////////////////////</div>
<div class="c" style="left:252.30px;top:601.04px;font-size:8.5px;line-height:8px;transform:scaleX(0.7843);color:#4444ee">&#x27;</div>
<div class="c" style="left:256.30px;top:600.34px;font-size:8.5px;line-height:8px;transform:scale(0.7843,0.8);font-weight:bold;color:#4444ee">///////////////////////////////////////////////////////////////////////</div>
<div class="a" style="left:126.00px;top:625.60px;width:792.00px;height:11.40px;background:#ebebeb"></div>
<div class="a" style="left:127.00px;top:627.00px;width:23.90px;height:9.00px;border-top:1px solid #c0c0c0;border-left:1px solid #c0c0c0;border-right:1px solid #fafafa;border-bottom:1px solid #fafafa"></div>
<div class="a" style="left:151.50px;top:627.00px;width:32.50px;height:9.00px;border-top:1px solid #c0c0c0;border-left:1px solid #c0c0c0;border-right:1px solid #fafafa;border-bottom:1px solid #fafafa"></div>
<div class="a" style="left:184.50px;top:627.00px;width:21.50px;height:9.00px;border-top:1px solid #c0c0c0;border-left:1px solid #c0c0c0;border-right:1px solid #fafafa;border-bottom:1px solid #fafafa"></div>
<div class="a" style="left:206.50px;top:627.00px;width:28.50px;height:9.00px;border-top:1px solid #c0c0c0;border-left:1px solid #c0c0c0;border-right:1px solid #fafafa;border-bottom:1px solid #fafafa"></div>
<div class="a" style="left:235.50px;top:627.00px;width:49.50px;height:9.00px;border-top:1px solid #c0c0c0;border-left:1px solid #c0c0c0;border-right:1px solid #fafafa;border-bottom:1px solid #fafafa"></div>
<div class="t" style="left:128.10px;top:628.70px;font-size:6.4px;line-height:8px;color:#1e1e1e;transform:scaleX(0.856);">574 : 57</div>
<div class="t" style="left:186.50px;top:628.70px;font-size:6.4px;line-height:8px;color:#1e1e1e;transform:scaleX(0.887);">Insert</div>
<div class="t" style="left:209.50px;top:628.70px;font-size:6.4px;line-height:8px;color:#1e1e1e;transform:scaleX(0.810);">Compiled</div>
<div class="t" style="left:238.20px;top:628.70px;font-size:6.4px;line-height:8px;color:#1e1e1e;transform:scaleX(0.902);">DAT - 220 bytes</div>
<div class="a" style="left:125.00px;top:637.00px;width:794.00px;height:1.00px;background:#000"></div>
<div class="a" style="left:126.00px;top:638.00px;width:571.00px;height:29.00px;background:#fff"></div>
<div class="a" style="left:697.00px;top:638.00px;width:221.00px;height:29.00px;background:#4b4b4b"></div>
<div class="a" style="left:708.00px;top:641.00px;width:1.00px;height:23.00px;background:#8c8c8c"></div>
<div class="a" style="left:708.00px;top:663.00px;width:210.00px;height:1.00px;background:#8c8c8c"></div>
<div class="a" style="left:422.00px;top:153.50px;width:434.00px;height:252.00px;background:#ececec;border:1px solid #a4a4a4;box-shadow:0 0 0 1px #e8e8ee,0 0 3px 4px rgba(255,255,255,0.95)"></div>
<div class="a" style="left:423.00px;top:154.50px;width:432.00px;height:13.00px;background:linear-gradient(#fafafa 0,#ececec 50%,#d8d8d8 100%)"></div>
<div class="a" style="left:423.00px;top:167.00px;width:432.00px;height:1.00px;background:#c0c0c0"></div>
<div class="a" style="left:425.00px;top:158.50px;width:6.00px;height:6.00px;background:linear-gradient(90deg,#f0d020 0,#f0d020 35%,#e04040 35%,#e04040 55%,#40a0e0 55%);border-bottom:2px solid #50b040"></div>
<div class="t" style="left:434.20px;top:156.60px;font-size:8px;line-height:10px;color:#1a1a1a;font-weight:bold;transform:scaleX(0.834);">Object Info</div>
<div class="a" style="left:821.50px;top:155.30px;width:8.50px;height:12.00px;background:linear-gradient(#f8f8fc,#c4c8d4);border:1px solid #8c94a4;border-radius:2px"></div>
<div class="a" style="left:824.00px;top:163.00px;width:3.50px;height:1.20px;background:#333"></div>
<div class="a" style="left:832.30px;top:155.30px;width:10.20px;height:12.00px;background:linear-gradient(#f8f8fc,#c4c8d4);border:1px solid #8c94a4;border-radius:2px"></div>
<div class="a" style="left:834.50px;top:158.50px;width:6.00px;height:5.50px;border:1px solid #333;border-top-width:2px"></div>
<div class="a" style="left:843.80px;top:155.30px;width:10.20px;height:12.00px;background:linear-gradient(#f09090,#c83838);border:1px solid #983838;border-radius:2px"></div>
<svg class="a" style="left:846px;top:158.3px" width="6" height="6" viewBox="0 0 6 6"><path d="M0.8,0.8 L5.2,5.2 M5.2,0.8 L0.8,5.2" stroke="#fff" stroke-width="1.5"/></svg>
<div class="a" style="left:423.00px;top:168.00px;width:432.00px;height:237.00px;background:#efefef"></div>
<div class="a" style="left:430.00px;top:175.00px;width:152.00px;height:74.00px;background:#fff;border:1px solid #9c9c9c;border-right-color:#e4e4e4;border-bottom-color:#e4e4e4"></div>
<div class="a" style="left:431.00px;top:176.00px;width:150.00px;height:1.00px;background:#d0d0d0"></div>
<div class="a" style="left:433.00px;top:176.50px;width:3.2px;height:1.8px;background:#e0b040;border-radius:1px 1px 0 0"></div>
<div class="a" style="left:433.00px;top:177.30px;width:6.5px;height:5px;background:linear-gradient(#fff4c0 0,#fce48a 30%,#eebc3c 100%);border:1px solid #d0a030;border-radius:1px"></div>
<div class="a" style="left:441.00px;top:175.60px;width:48.00px;height:7.60px;background:#dcdcdc"></div>
<div class="t" style="left:441.90px;top:174.90px;font-size:7px;line-height:9px;color:#101010;font-weight:bold;transform:scaleX(0.842);">lunar_demo_010</div>
<div class="a" style="left:443.00px;top:185.00px;width:3.2px;height:1.8px;background:#e0b040;border-radius:1px 1px 0 0"></div>
<div class="a" style="left:443.00px;top:185.80px;width:6px;height:5px;background:linear-gradient(#fff4c0 0,#fce48a 30%,#eebc3c 100%);border:1px solid #d0a030;border-radius:1px"></div>
<div class="t" style="left:452.00px;top:184.30px;font-size:6.4px;line-height:8px;color:#262626;transform:scaleX(0.811);">tv_drv_010</div>
<div class="a" style="left:443.00px;top:192.30px;width:3.2px;height:1.8px;background:#e0b040;border-radius:1px 1px 0 0"></div>
<div class="a" style="left:443.00px;top:193.10px;width:6px;height:5px;background:linear-gradient(#fff4c0 0,#fce48a 30%,#eebc3c 100%);border:1px solid #d0a030;border-radius:1px"></div>
<div class="t" style="left:452.00px;top:192.10px;font-size:5.6px;line-height:7px;color:#262626;transform:scaleX(0.936);">graphics_drv_010</div>
<div class="a" style="left:443.00px;top:199.90px;width:3.2px;height:1.8px;background:#e0b040;border-radius:1px 1px 0 0"></div>
<div class="a" style="left:443.00px;top:200.70px;width:6px;height:5px;background:linear-gradient(#fff4c0 0,#fce48a 30%,#eebc3c 100%);border:1px solid #d0a030;border-radius:1px"></div>
<div class="t" style="left:452.00px;top:199.20px;font-size:6.4px;line-height:8px;color:#262626;transform:scaleX(0.805);">mouse_iso_010</div>
<div class="a" style="left:443.00px;top:208.50px;width:3.2px;height:1.8px;background:#e0b040;border-radius:1px 1px 0 0"></div>
<div class="a" style="left:443.00px;top:209.30px;width:6px;height:5px;background:linear-gradient(#fff4c0 0,#fce48a 30%,#eebc3c 100%);border:1px solid #d0a030;border-radius:1px"></div>
<div class="t" style="left:452.00px;top:207.80px;font-size:6.4px;line-height:8px;color:#262626;transform:scaleX(0.826);">keyboard_iso_010</div>
<div class="a" style="left:428.50px;top:250.50px;width:155.00px;height:135.00px;background:#f3f3f3;border-left:1px solid #e2e2e2;border-right:1px solid #d8d8d8"></div>
<div class="a" style="left:430.00px;top:251.50px;width:152.00px;height:1.00px;background:#d4d4d4"></div>
<div class="a" style="left:430.00px;top:252.50px;width:152.00px;height:1.00px;background:#fcfcfc"></div>
<div class="a" style="left:430.00px;top:332.50px;width:152.00px;height:1.00px;background:#d4d4d4"></div>
<div class="a" style="left:430.00px;top:333.50px;width:152.00px;height:1.00px;background:#fcfcfc"></div>
<div class="a" style="left:430.00px;top:384.20px;width:152.00px;height:1.00px;background:#d4d4d4"></div>
<div class="a" style="left:430.00px;top:385.20px;width:152.00px;height:1.00px;background:#fcfcfc"></div>
<div class="t" style="left:436.00px;top:262.50px;font-size:6px;line-height:8px;color:#111;font-weight:bold;transform:scaleX(1.030);">$0010</div>
<div class="t" style="left:481.30px;top:259.50px;font-size:9px;line-height:11px;color:#2a2a2a;font-weight:bold;transform:scaleX(0.931);">RAM Usage</div>
<div class="t" style="left:558.40px;top:262.50px;font-size:6px;line-height:8px;color:#111;font-weight:bold;transform:scaleX(0.882);">$7FFF</div>
<div class="a" style="left:436.00px;top:275.00px;width:33.40px;height:11.80px;background:#f25c6c"></div>
<div class="a" style="left:469.40px;top:275.00px;width:4.40px;height:11.80px;background:#f4ee40"></div>
<div class="a" style="left:473.80px;top:275.00px;width:100.30px;height:11.80px;background:#5a5af0"></div>
<div class="t" style="left:434.90px;top:294.20px;font-size:8px;line-height:10px;color:#222;font-weight:bold;transform:scaleX(0.898);">Program :</div>
<div class="t" style="left:502.00px;top:294.20px;font-size:8px;line-height:10px;color:#222;font-weight:bold;transform:scaleX(0.916);">1,994</div>
<div class="t" style="left:521.80px;top:294.20px;font-size:8px;line-height:10px;color:#444;font-weight:bold;transform:scaleX(0.898);">Longs</div>
<div class="a" style="left:563.10px;top:295.00px;width:11.30px;height:8.30px;background:#f25c6c"></div>
<div class="t" style="left:434.90px;top:305.90px;font-size:8px;line-height:10px;color:#222;font-weight:bold;transform:scaleX(0.965);">Variable :</div>
<div class="t" style="left:508.00px;top:305.90px;font-size:8px;line-height:10px;color:#222;font-weight:bold;transform:scaleX(0.925);">238</div>
<div class="t" style="left:521.80px;top:305.90px;font-size:8px;line-height:10px;color:#444;font-weight:bold;transform:scaleX(0.898);">Longs</div>
<div class="a" style="left:563.10px;top:306.70px;width:11.30px;height:8.30px;background:#f4ee40"></div>
<div class="t" style="left:434.90px;top:317.60px;font-size:8px;line-height:10px;color:#222;font-weight:bold;transform:scaleX(0.924);">Stack / Free :</div>
<div class="t" style="left:502.00px;top:317.60px;font-size:8px;line-height:10px;color:#222;font-weight:bold;transform:scaleX(0.916);">5,956</div>
<div class="t" style="left:521.80px;top:317.60px;font-size:8px;line-height:10px;color:#444;font-weight:bold;transform:scaleX(0.898);">Longs</div>
<div class="a" style="left:563.10px;top:318.40px;width:11.30px;height:8.30px;background:#5a5af0"></div>
<div class="t" style="left:434.90px;top:344.20px;font-size:8px;line-height:10px;color:#222;font-weight:bold;transform:scaleX(0.895);">Clock Mode :</div>
<div class="t" style="left:522.20px;top:344.20px;font-size:8px;line-height:10px;color:#222;font-weight:bold;transform:scaleX(0.884);">XTAL1 + PLL4X</div>
<div class="t" style="left:434.90px;top:356.10px;font-size:8px;line-height:10px;color:#222;font-weight:bold;transform:scaleX(0.903);">Clock Freq :</div>
<div class="t" style="left:527.60px;top:356.10px;font-size:8px;line-height:10px;color:#222;font-weight:bold;transform:scaleX(0.904);">40,012,000 Hz</div>
<div class="t" style="left:434.90px;top:368.00px;font-size:8px;line-height:10px;color:#222;font-weight:bold;transform:scaleX(0.920);">XIN Freq :</div>
<div class="t" style="left:527.60px;top:368.00px;font-size:8px;line-height:10px;color:#222;font-weight:bold;transform:scaleX(0.904);">10,003,000 Hz</div>
<div class="a" style="left:446.60px;top:388.60px;width:50.50px;height:12.40px;background:linear-gradient(#fbfbfb,#e8e8e8);border:1px solid #a0a0a0;border-top-color:#f4f4f4;border-left-color:#f4f4f4;box-shadow:1px 1px 0 #6a6a6a"></div>
<div class="a" style="left:446.00px;top:388.00px;width:52.50px;height:14.40px;border:1px solid #777;border-right-color:#222;border-bottom:1.5px solid #222"></div>
<div class="t" style="left:465.80px;top:390.20px;font-size:6.6px;line-height:8px;color:#262626;transform:scaleX(0.729);">Close</div>
<div class="a" style="left:512.60px;top:388.60px;width:51.80px;height:12.40px;background:linear-gradient(#fbfbfb,#e8e8e8);border:1px solid #a0a0a0;border-top-color:#f4f4f4;border-left-color:#f4f4f4;box-shadow:1px 1px 0 #6a6a6a"></div>
<div class="t" style="left:527.60px;top:390.20px;font-size:6.6px;line-height:8px;color:#262626;transform:scaleX(0.814);">Hide <u>H</u>ex</div>
<div class="a" style="left:587.50px;top:170.50px;width:263.00px;height:214.00px;border:1px solid #cacaca;border-right-color:#fcfcfc;border-bottom-color:#fcfcfc;background:#f0f0f0"></div>
<div class="a" style="left:612.40px;top:175.20px;width:164.40px;height:205.40px;background:#f3a0a2"></div>
<div class="a" style="left:779.70px;top:175.20px;width:56.60px;height:205.40px;background:#f3a0a2"></div>
<div class="a" style="left:612.40px;top:175.20px;width:164.40px;height:6.40px;background:#080808"></div>
<div class="a" style="left:779.70px;top:175.20px;width:56.60px;height:6.40px;background:#080808"></div>
<div class="a" style="left:612.50px;top:175.60px;width:5.20px;height:5.80px;background:#7a3060"></div>
<div class="c" style="left:595.10px;top:175.79px;font-size:13.6px;line-height:12.960px;font-weight:bold;color:#333;transform-origin:0 0;transform:scale(0.4350,0.5)">0000
0010
0020
0030
0040
0050
0060
0070
0080
0090
00A0
00B0
00C0
00D0
00E0
00F0
0100
0110
0120
0130
0140
0150
0160
0170
0180
0190
01A0
01B0
01C0
01D0
01E0
01F0</div>
<div class="c" style="left:613.00px;top:175.79px;font-size:13.6px;line-height:12.960px;font-weight:bold;color:#d0d8d0;transform-origin:0 0;transform:scale(0.4173,0.5)">E0 08 02 02 60 F9 10 00 38 1F F8 21 1C 01 2C 20</div>
<div class="c" style="left:613.00px;top:182.27px;font-size:13.6px;line-height:12.960px;font-weight:bold;color:#3c1414;transform-origin:0 0;transform:scale(0.4173,0.5)">00 05 04 04 0C 01 30 00 83 04 00 04 C2 04 08 00
F2 04 00 00 14 05 04 00 77 05 10 00 7F 05 00 00
80 05 A4 02 10 0A 6A 02 6C 00 1C 38 02 C4 13 04
00 00 00 00 01 00 00 00 30 00 00 04 00 00 00 00
00 00 00 00 00 00 00 00 0C 00 00 04 0C 00 00 00
0A 00 00 00 01 00 00 00 00 00 00 00 00 00 00 00
50 8C 4E 03 00 00 00 00 00 40 32 00 AA 0A 32 00
00 30 00 00 55 95 32 00 00 00 32 00 00 00 30 31
32 33 34 35 36 37 38 39 41 42 43 44 45 46 52 65
61 64 6F 75 74 73 00 4C 61 6E 64 65 72 73 00 50
52 45 53 53 20 53 54 41 52 54 00 4D 61 72 73 20
4C 61 6E 64 65 72 00 00 00 00 00 00 AA 00 00 00
03 00 00 00 05 00 00 00 F6 FF FF FF FE FF FF FF
0F 00 00 00 14 00 00 00 0A 00 00 00 D8 FF FF FF
00 00 00 00 00 00 00 00 0F 00 00 00 0A 00 00 00
03 00 00 00 CE FF FF FF F6 FF FF FF 05 00 00 00
00 00 00 00 0A 00 00 00 EC FF FF FF 01 37 21 00
00 01 01 37 00 00 00 01 48 C7 38 38 0E 1E A8 01
74 59 C8 40 50 01 40 00 00 01 35 6E 39 10 18 64
37 01 EC 37 23 E8 F4 38 FB 06 0C 01 EC 64 09 40
35 37 05 06 02 00 35 75 35 73 38 5C 00 35 00 C2
79 EC 74 C8 24 F4 EC 78 37 25 E8 38 00 C3 EC 70
C3 20 F4 74 EC B9 01 74 35 C8 24 38 E8 76 02 5A
35 C8 20 38 ED 70 02 58 35 A8 02 94 01 08 09 01
01 38 0C 38 0C 35 60 38 00 29 38 00 05 09 03 39
06 05 A8 02 94 35 06 AC 37 00 00 33 37 21 00 38
38 0D 37 0C 38 11 09 02 9A 37 00 C9 01 40 35 C9
01 44 35 C9 01 40 35 C0 04 5C 35 C3 06 00 37 00
C9 01 64 37 21 C9 01 68 35 A0 02 98 35 A9 02 98
36 A9 02 94 0C 36 A9 02 94 0C 01 06 09 04 00 05
05 C9 01 70 A8 02 94 37 21 FC 08 00 5A D8 01 64</div>
<div class="c" style="left:780.00px;top:175.79px;font-size:13.6px;line-height:12.960px;color:#e8e8e8;transform-origin:0 0;transform:scale(0.4338,0.5)">α◘☻☻`∙►<i>█</i>8▼°!∟☺, </div>
<div class="c" style="left:780.00px;top:182.27px;font-size:13.6px;line-height:12.960px;font-weight:bold;color:#2a0c0c;transform-origin:0 0;transform:scale(0.4338,0.5)"><i>█</i>♣♦♦♀☺0<i>█</i>â♦<i>█</i>♦┬♦◘<i>█</i>
≥♦<i>██</i>¶♣♦<i>█</i>w♣►<i>█</i>♣<i>██</i>
Ç♣ñ☻►◙j☻l<i>█</i>∟8☻─‼♦
<i>████</i>☺<i>███</i>0<i>██</i>♦<i>████</i>
<i>████████</i>♀<i>██</i>♦♀<i>███</i>
◙<i>███</i>☺<i>███████████</i>
PîN♥<i>█████</i>@2<i>█</i>¬◙2<i>█</i>
<i>█</i>0<i>██</i>Uò2<i>███</i>2<i>███</i>01
23456789ABCDEFRe
adouts<i>█</i>Landers<i>█</i>P
RESS START<i>█</i>Mars 
Lander<i>██████</i>¬<i>███</i>
♥<i>███</i>♣<i>███</i>÷───■───
☼<i>███</i>¶<i>███</i>◙<i>███</i>╪───
<i>████████</i>☼<i>███</i>◙<i>███</i>
♥<i>███</i>╬───÷───♣<i>███</i>
<i>████</i>◙<i>███</i>∞───☺7!<i>█</i>
<i>█</i>☺☺7<i>███</i>☺H╟88♫▲¿☺
tY╚@P☺@<i>██</i>☺5n9►↑d
7☺∞7#Φ⌠8√♠♀☺∞d○@
57♣♠☻<i>█</i>5u5s8\<i>█</i>5<i>█</i>┬
y∞t╚$⌠∞x7%Φ8<i>█</i>├∞p
├ ⌠t∞╣☺t5╚$8Φv☻Z
5╚ 8φp☻X5¿☻ö☺◘○☺
☺8♀8♀5`8<i>█</i>)8<i>█</i>♣○♥9
♠♣¿☻ö5♠¼7<i>██</i>37!<i>█</i>8
8♪7♀8◄○☻Ü7<i>█</i>╔☺@5╔
☺D5╔☺@5└♦\5├♠<i>█</i>7<i>█</i>
╔☺d7!╔☺h5á☻ÿ5⌐☻ÿ
6⌐☻ö♀6⌐☻ö♀☺♠○♦<i>█</i>♣
♣╔☺p¿☻ö7!ⁿ◘<i>█</i>Z╪☺d</div>
<div class="a" style="left:838.80px;top:175.50px;width:9.20px;height:205.50px;background:#f6f6f6;border:1px solid #dedede"></div>
<div class="a" style="left:839.30px;top:176.00px;width:8.20px;height:8.00px;background:linear-gradient(#fafafa,#e4e4e4);border:1px solid #bdbdbd"></div>
<div class="a" style="left:842.40px;top:179.30px;width:2.20px;height:1.60px;background:#111"></div>
<div class="a" style="left:839.30px;top:184.50px;width:8.20px;height:4.00px;border:1px solid #cfcfcf;background:#f0f0f0"></div>
<div class="a" style="left:839.30px;top:373.30px;width:8.20px;height:8.00px;background:linear-gradient(#fafafa,#e4e4e4);border:1px solid #bdbdbd"></div>
<div class="a" style="left:842.40px;top:376.80px;width:2.20px;height:1.60px;background:#111"></div>
<div class="a" style="left:591.00px;top:389.30px;width:48.50px;height:11.50px;background:linear-gradient(#fbfbfb,#e8e8e8);border:1px solid #a0a0a0;border-top-color:#f4f4f4;border-left-color:#f4f4f4;box-shadow:1px 1px 0 #6a6a6a"></div>
<div class="t" style="left:594.70px;top:390.45px;font-size:6.6px;line-height:8px;color:#262626;transform:scaleX(0.844);">Load <u>R</u>AM + Run</div>
<div class="a" style="left:643.00px;top:389.30px;width:58.50px;height:11.50px;background:linear-gradient(#fbfbfb,#e8e8e8);border:1px solid #a0a0a0;border-top-color:#f4f4f4;border-left-color:#f4f4f4;box-shadow:1px 1px 0 #6a6a6a"></div>
<div class="t" style="left:646.60px;top:390.45px;font-size:6.6px;line-height:8px;color:#262626;transform:scaleX(0.815);">Load <u>E</u>EPROM + Run</div>
<div class="a" style="left:705.00px;top:389.30px;width:42.50px;height:11.50px;background:linear-gradient(#fbfbfb,#e8e8e8);border:1px solid #a0a0a0;border-top-color:#f4f4f4;border-left-color:#f4f4f4;box-shadow:1px 1px 0 #6a6a6a"></div>
<div class="t" style="left:708.70px;top:390.45px;font-size:6.6px;line-height:8px;color:#262626;transform:scaleX(0.793);">Lo<u>a</u>d EEPROM</div>
<div class="a" style="left:751.00px;top:389.30px;width:44.50px;height:11.50px;background:linear-gradient(#fbfbfb,#e8e8e8);border:1px solid #a0a0a0;border-top-color:#f4f4f4;border-left-color:#f4f4f4;box-shadow:1px 1px 0 #6a6a6a"></div>
<div class="t" style="left:754.70px;top:390.45px;font-size:6.6px;line-height:8px;color:#262626;transform:scaleX(0.780);">Save <u>B</u>inary File</div>
<div class="a" style="left:799.80px;top:389.30px;width:51.20px;height:11.50px;background:linear-gradient(#fbfbfb,#e8e8e8);border:1px solid #a0a0a0;border-top-color:#f4f4f4;border-left-color:#f4f4f4;box-shadow:1px 1px 0 #6a6a6a"></div>
<div class="t" style="left:801.80px;top:390.45px;font-size:6.6px;line-height:8px;color:#262626;transform:scaleX(0.813);">Save EEPROM <u>F</u>ile</div></body></html>
